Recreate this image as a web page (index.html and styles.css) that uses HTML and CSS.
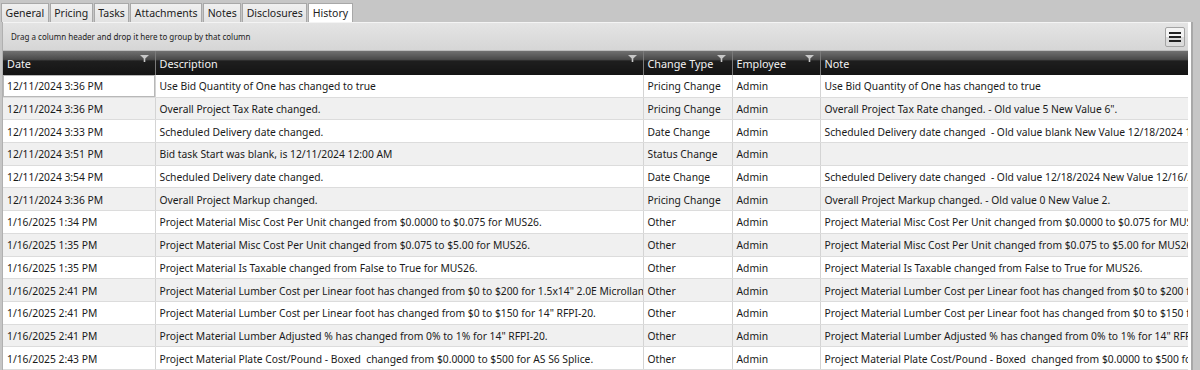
FILE: index.html
```html
<!DOCTYPE html>
<html lang="en">

<head>
    <meta charset="UTF-8">
    <meta name="viewport" content="width=device-width, initial-scale=1.0">
    <title>History</title>
    <link rel="stylesheet" href="styles.css">
</head>

<body>

    <!-- Tabs -->
    <div class="tabs">
        <a href="#" class="tab">General</a>
        <a href="#" class="tab">Pricing</a>
        <a href="#" class="tab">Tasks</a>
        <a href="#" class="tab">Attachments</a>
        <a href="#" class="tab">Notes</a>
        <a href="#" class="tab">Disclosures</a>
        <a href="#" class="tab active">History</a>
    </div>

    <div class="panel">
        <div class="grid">
            <!-- Group panel -->
            <div class="group-panel">
                <span>Drag a column header and drop it here to group by that column</span>
                <button class="menu-btn">
                    <svg width="12" height="10" viewBox="0 0 12 10">
                        <rect x="0" y="0" width="12" height="2" fill="#222"/>
                        <rect x="0" y="4" width="12" height="2" fill="#222"/>
                        <rect x="0" y="8" width="12" height="2" fill="#222"/>
                    </svg>
                </button>
            </div>

            <table class="history">
                <colgroup>
                    <col style="width: 152px">
                    <col style="width: 488px">
                    <col style="width: 89px">
                    <col style="width: 88px">
                    <col>
                </colgroup>
                <thead>
                    <tr>
                        <th>Date</th>
                        <th>Description</th>
                        <th>Change Type</th>
                        <th>Employee</th>
                        <th>Note</th>
                    </tr>
                </thead>
                <tbody id="rows"></tbody>
            </table>
        </div>
        <div class="side-strip"></div>
    </div>

    <script>
        const history = [
            ['12/11/2024 3:36 PM', 'Use Bid Quantity of One has changed to true', 'Pricing Change', 'Admin', 'Use Bid Quantity of One has changed to true'],
            ['12/11/2024 3:36 PM', 'Overall Project Tax Rate changed.', 'Pricing Change', 'Admin', 'Overall Project Tax Rate changed. - Old value 5 New Value 6".'],
            ['12/11/2024 3:33 PM', 'Scheduled Delivery date changed.', 'Date Change', 'Admin', 'Scheduled Delivery date changed  - Old value blank New Value 12/18/2024 12:00:00 AM'],
            ['12/11/2024 3:51 PM', 'Bid task Start was blank, is 12/11/2024 12:00 AM', 'Status Change', 'Admin', ''],
            ['12/11/2024 3:54 PM', 'Scheduled Delivery date changed.', 'Date Change', 'Admin', 'Scheduled Delivery date changed  - Old value 12/18/2024 New Value 12/16/2024'],
            ['12/11/2024 3:36 PM', 'Overall Project Markup changed.', 'Pricing Change', 'Admin', 'Overall Project Markup changed. - Old value 0 New Value 2.'],
            ['1/16/2025 1:34 PM', 'Project Material Misc Cost Per Unit changed from $0.0000 to $0.075 for MUS26.', 'Other', 'Admin', 'Project Material Misc Cost Per Unit changed from $0.0000 to $0.075 for MUS26.'],
            ['1/16/2025 1:35 PM', 'Project Material Misc Cost Per Unit changed from $0.075 to $5.00 for MUS26.', 'Other', 'Admin', 'Project Material Misc Cost Per Unit changed from $0.075 to $5.00 for MUS26.'],
            ['1/16/2025 1:35 PM', 'Project Material Is Taxable changed from False to True for MUS26.', 'Other', 'Admin', 'Project Material Is Taxable changed from False to True for MUS26.'],
            ['1/16/2025 2:41 PM', 'Project Material Lumber Cost per Linear foot has changed from $0 to $200 for 1.5x14" 2.0E Microllam LVL', 'Other', 'Admin', 'Project Material Lumber Cost per Linear foot has changed from $0 to $200 for 1.5x14" 2.0E Microllam LVL'],
            ['1/16/2025 2:41 PM', 'Project Material Lumber Cost per Linear foot has changed from $0 to $150 for 14" RFPI-20.', 'Other', 'Admin', 'Project Material Lumber Cost per Linear foot has changed from $0 to $150 for 14" RFPI-20.'],
            ['1/16/2025 2:41 PM', 'Project Material Lumber Adjusted % has changed from 0% to 1% for 14" RFPI-20.', 'Other', 'Admin', 'Project Material Lumber Adjusted % has changed from 0% to 1% for 14" RFPI-20.'],
            ['1/16/2025 2:43 PM', 'Project Material Plate Cost/Pound - Boxed  changed from $0.0000 to $500 for AS S6 Splice.', 'Other', 'Admin', 'Project Material Plate Cost/Pound - Boxed  changed from $0.0000 to $500 for AS S6 Splice.']
        ];

        // Funnel icon shown in each header cell
        const funnel = `<svg class="funnel" width="9" height="7" viewBox="0 0 9 7">
            <path d="M0 0 H9 L5.3 3.4 V7 H3.7 V3.4 Z" fill="#c8c8c8"/>
        </svg>`;

        document.querySelectorAll('.history th').forEach((th, i) => {
            if (i < 4) th.insertAdjacentHTML('beforeend', funnel);
        });

        const body = document.getElementById('rows');
        history.forEach((row, r) => {
            const tr = document.createElement('tr');
            row.forEach((text, c) => {
                const td = document.createElement('td');
                td.textContent = text;
                if (r === 0 && c === 0) td.classList.add('current');
                tr.appendChild(td);
            });
            body.appendChild(tr);
        });
    </script>

</body>

</html>
```

FILE: styles.css
```css
/* Global Styles */
body {
    font-family: "Noto Sans", "Open Sans", sans-serif;
    font-size: 10.3px;
    background-color: #c6c6c6;
    margin: 0;
    padding: 0;
    overflow: hidden;
}

/* Tabs */
.tabs {
    display: flex;
    padding: 3px 0 0 1px;
    height: 19px;
}

.tab {
    color: #222;
    text-decoration: none;
    padding: 0 3.5px;
    line-height: 18px;
    font-size: 10.5px;
    background: linear-gradient(#f0f0f0, #e2e2e2);
    border: 1px solid #a8a8a8;
    border-bottom: none;
    margin-right: 1px;
}

.tab.active {
    background: #fff;
    height: 20px;
}

/* Panel */
.panel {
    display: flex;
    height: 348px;
}

.grid {
    width: 1185px;
    border-left: 1px solid #b0b0b0;
    margin-left: 2px;
    overflow: hidden;
    background: #fff;
}

.side-strip {
    width: 3px;
    background: #fff;
    border-right: 2px solid #a8a8a8;
}

/* Group Panel */
.group-panel {
    display: flex;
    align-items: center;
    justify-content: space-between;
    height: 27px;
    padding: 0 3px 0 8px;
    background: linear-gradient(#e4e4e4, #d6d6d6);
    border-top: 1px solid #f4f4f4;
    border-bottom: 1px solid #bcbcbc;
    font-size: 8px;
    color: #222;
}

.menu-btn {
    width: 20px;
    height: 20px;
    padding: 0;
    display: flex;
    align-items: center;
    justify-content: center;
    border: 1px solid #a4a4a4;
    border-radius: 2px;
    background: linear-gradient(#f4f4f4 50%, #dcdcdc 50%);
}

/* History Table */
.history {
    width: 100%;
    border-collapse: collapse;
    table-layout: fixed;
}

.history th {
    position: relative;
    height: 24px;
    padding: 0 4px;
    text-align: left;
    font-weight: normal;
    font-size: 10.8px;
    color: #f2f2f2;
    background: linear-gradient(#707070, #4a4a4a 35%, #1e1e1e 42%, #141414);
    border-left: 1px solid #7a7a7a;
    white-space: nowrap;
    overflow: hidden;
}

.history th:first-child {
    border-left: none;
}

.funnel {
    position: absolute;
    top: 4px;
    right: 6px;
}

.history td {
    height: 20.7px;
    padding: 1px 4px 0;
    border-left: 1px solid #d4d4d4;
    border-bottom: 1px solid #dcdcdc;
    color: #1a1a1a;
    white-space: pre;
    overflow: hidden;
}

.history td:first-child {
    border-left: none;
}

.history tr:nth-child(even) td {
    background-color: #f0f0f0;
}

.history td.current {
    outline: 1px solid #b8b8b8;
    outline-offset: -1px;
}
```
